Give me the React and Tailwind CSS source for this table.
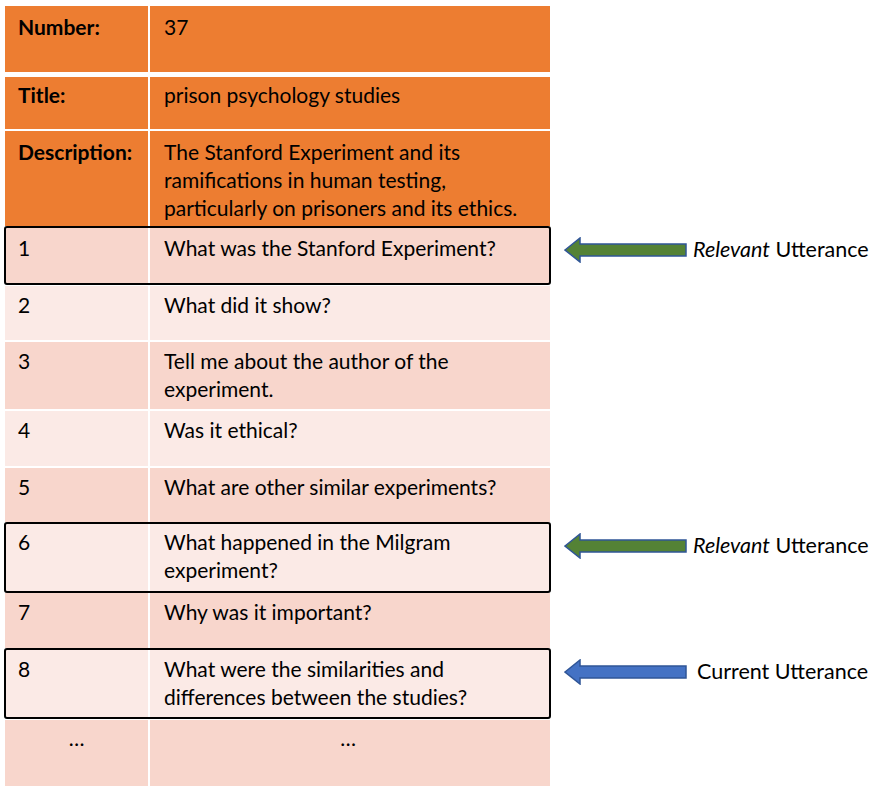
import React from "react";

const LIGHT = "bg-[#f8d6cc]";
const LIGHTER = "bg-[#fbeae6]";

function Arrow({ color, stroke }) {
  return (
    <svg width="124" height="26" viewBox="0 0 124 26" className="block">
      <polygon
        points="1,13 16,1 16,7 122,7 122,19 16,19 16,25"
        fill={color}
        stroke={stroke}
        strokeWidth="1.5"
        strokeLinejoin="miter"
      />
    </svg>
  );
}

function Row({ h, bg, left, right, boxed, bold, mb, annotation, leftCenter, rightCenter, pt }) {
  return (
    <div className={`flex ${mb}`}>
      <div
        className={`relative flex w-[545px] shrink-0 gap-[2px] ${h} ${
          boxed ? "outline-2 outline-black -outline-offset-1 rounded-[2px]" : ""
        }`}
      >
        <div
          className={`w-[143px] shrink-0 ${bg} ${pt} ${bold ? "font-bold" : ""} ${
            leftCenter ? "text-center" : "pl-[13px]"
          }`}
        >
          {left}
        </div>
        <div className={`flex-1 ${bg} ${pt} pr-[4px] ${rightCenter ? "text-center" : "pl-[14px]"}`}>
          {right}
        </div>
      </div>
      {annotation}
    </div>
  );
}

function Note({ arrow, children, pl }) {
  return (
    <div className="flex items-start pt-[10px]">
      <div className="ml-[14px]">{arrow}</div>
      <div className={`${pl} text-[21.5px] leading-[28px] -mt-[2px] whitespace-nowrap`}>{children}</div>
    </div>
  );
}

export default function App() {
  return (
    <div
      className="w-[875px] h-[790px] bg-white text-black text-[21px] leading-[28px] pt-[6px] pl-[5px]"
      style={{ fontFamily: "Lato, 'Open Sans', sans-serif" }}
    >
      <Row h="h-[66px]" bg="bg-[#ed7d31]" pt="pt-[7px]" left="Number:" right="37" bold mb="mb-[5px]" />
      <Row h="h-[52px]" bg="bg-[#ed7d31]" pt="pt-[4px]" left="Title:" right="prison psychology studies" bold mb="mb-[2px]" />
      <Row
        h="h-[95px]"
        bg="bg-[#ed7d31]"
        pt="pt-[7px]"
        left="Description:"
        bold
        right={
          <>
            The Stanford Experiment and its
            <br />
            ramifications in human testing,
            <br />
            particularly on prisoners and its ethics.
          </>
        }
        mb="mb-[1px]"
      />
      <Row
        h="h-[57px]"
        bg={LIGHT}
        pt="pt-[7px]"
        left="1"
        right="What was the Stanford Experiment?"
        boxed
        mb="mb-[2px]"
        annotation={
          <Note pl="pl-[5px]" arrow={<Arrow color="#548235" stroke="#2f5597" />}>
            <i>Relevant</i> Utterance
          </Note>
        }
      />
      <Row h="h-[54px]" bg={LIGHTER} pt="pt-[5px]" left="2" right="What did it show?" mb="mb-[2px]" />
      <Row
        h="h-[67px]"
        bg={LIGHT}
        pt="pt-[5px]"
        left="3"
        right={
          <>
            Tell me about the author of the
            <br />
            experiment.
          </>
        }
        mb="mb-[2px]"
      />
      <Row h="h-[55px]" bg={LIGHTER} pt="pt-[5px]" left="4" right="Was it ethical?" mb="mb-[2px]" />
      <Row h="h-[54px]" bg={LIGHT} pt="pt-[5px]" left="5" right="What are other similar experiments?" mb="mb-[1px]" />
      <Row
        h="h-[69px]"
        bg={LIGHTER}
        pt="pt-[5px]"
        left="6"
        right={
          <>
            What happened in the Milgram
            <br />
            experiment?
          </>
        }
        boxed
        mb="mb-[1px]"
        annotation={
          <Note pl="pl-[5px]" arrow={<Arrow color="#548235" stroke="#2f5597" />}>
            <i>Relevant</i> Utterance
          </Note>
        }
      />
      <Row h="h-[55px]" bg={LIGHT} pt="pt-[5px]" left="7" right="Why was it important?" mb="mb-[1px]" />
      <Row
        h="h-[69px]"
        bg={LIGHTER}
        pt="pt-[6px]"
        left="8"
        right={
          <>
            What were the similarities and
            <br />
            differences between the studies?
          </>
        }
        boxed
        mb="mb-[2px]"
        annotation={
          <Note pl="pl-[9px]" arrow={<Arrow color="#4472c4" stroke="#2f5597" />}>
            Current Utterance
          </Note>
        }
      />
      <Row h="h-[66px]" bg={LIGHT} pt="pt-[4px]" left="…" right="…" leftCenter rightCenter mb="" />
    </div>
  );
}
